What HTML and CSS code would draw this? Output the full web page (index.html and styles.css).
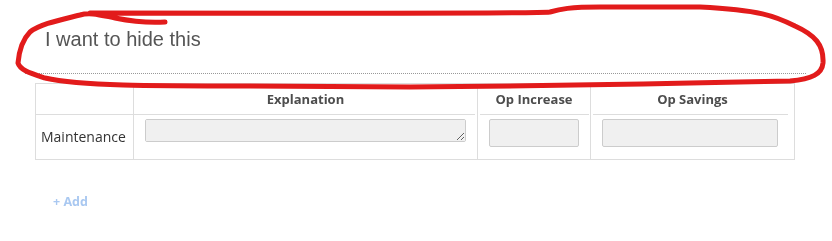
FILE: index.html
```html
<!DOCTYPE html>
<html>
<head>
<meta charset="utf-8">
<link rel="stylesheet" href="styles.css">
</head>
<body>
<div class="page">
  <div class="section-head">
    <h2 class="title">I want to hide this</h2>
  </div>
  <table class="grid">
    <thead>
      <tr>
        <th class="c1"></th>
        <th class="c2">Explanation</th>
        <th class="c3">Op Increase</th>
        <th class="c4">Op Savings</th>
      </tr>
    </thead>
    <tbody>
      <tr>
        <td class="label">Maintenance</td>
        <td class="cell"><textarea class="txt"></textarea></td>
        <td class="cell"><input class="inp inp-sm" type="text"></td>
        <td class="cell"><input class="inp inp-lg" type="text"></td>
      </tr>
    </tbody>
  </table>
  <div class="add">+ Add</div>
</div>
<svg class="scribble" width="832" height="100" viewBox="0 0 832 100">
  <path d="M 165 22 C 150 23, 130 21, 115 18 C 100 15, 90 12, 80 15 C 60 20, 40 24, 30 32 C 22 40, 19 52, 18 63 C 20 70, 30 73, 45 78 C 80 86, 150 86, 250 86 L 410 87 C 550 86, 700 83, 790 81 C 812 79, 822 74, 823 63 C 824 45, 815 35, 795 26 C 775 16, 760 10, 700 7 L 600 7 C 570 7, 560 9, 550 12 C 530 14, 400 13, 90 13" fill="none" stroke="#e21b1b" stroke-width="5" stroke-linecap="round" stroke-linejoin="round"/>
</svg>
</body>
</html>
```
FILE: styles.css
```css
html, body {
  margin: 0;
  padding: 0;
  background: #fff;
}
body {
  position: relative;
  width: 832px;
  height: 241px;
  overflow: hidden;
  font-family: "Open Sans", "Liberation Sans", sans-serif;
}
.page {
  padding: 0 26px 0 25px;
}
.section-head {
  height: 73px;
  border-bottom: 1px dotted #999;
  box-sizing: content-box;
}
.title {
  margin: 0;
  padding: 27px 0 0 20px;
  font-family: "Liberation Sans", Arial, sans-serif;
  font-weight: normal;
  font-size: 20px;
  line-height: 24px;
  color: #555;
}
.grid {
  margin: 9px 0 0 10px;
  width: 760px;
  border-collapse: collapse;
  border: 1px solid #ddd;
}
.grid th {
  height: 29px;
  padding: 0;
  font-size: 13px;
  font-weight: bold;
  color: #4d4d4d;
  text-align: center;
  vertical-align: middle;
  border-left: 1px solid #ddd;
  background: linear-gradient(#ddd, #ddd) no-repeat;
  background-position: left bottom;
  background-size: 100% 1px;
  padding-bottom: 2px;
}
.grid th.c1 { width: 97px; border-left: none; }
.grid th.c2 { width: 343px; background-size: calc(100% - 2px) 1px; }
.grid th.c3 { width: 112px; background-position: 2px bottom; background-size: calc(100% - 3px) 1px; }
.grid th.c4 { background-position: 2px bottom; background-size: calc(100% - 8px) 1px; }
.grid td {
  box-sizing: border-box;
  height: 44px;
  padding: 0;
  border-left: 1px solid #ddd;
  vertical-align: top;
}
.grid td.label {
  border-left: none;
  padding-left: 5px;
  vertical-align: middle;
  font-size: 14px;
  line-height: 18px;
  color: #333;
}
.grid td.cell {
  padding: 4px 0 0 11px;
}
.txt {
  display: block;
  box-sizing: border-box;
  width: 321px;
  height: 23px;
  margin: 0;
  padding: 2px 4px;
  background: #f0f0f0;
  border: 1px solid #ccc;
  border-radius: 2px;
  resize: both;
  font-family: inherit;
}
.inp {
  display: block;
  box-sizing: border-box;
  height: 28px;
  margin: 0;
  padding: 0 6px;
  background: #f0f0f0;
  border: 1px solid #ccc;
  border-radius: 2px;
}
.inp-sm { width: 90px; }
.inp-lg { width: 176px; }
.add {
  margin: 33px 0 0 28px;
  font-size: 12.5px;
  font-weight: bold;
  color: #a9c8f1;
}
.scribble {
  position: absolute;
  left: 0;
  top: 0;
  pointer-events: none;
}
```
